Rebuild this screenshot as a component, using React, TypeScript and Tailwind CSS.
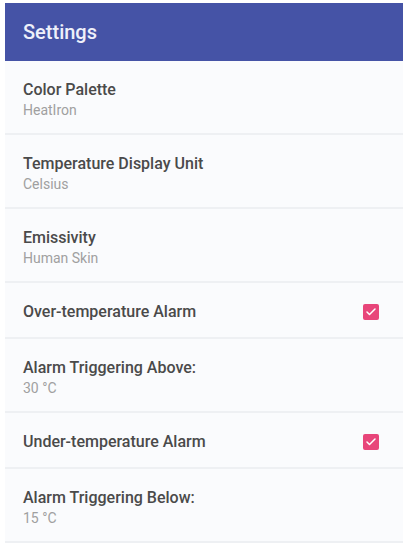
import { Check } from 'lucide-react';

type Row = {
  title: string;
  summary?: string;
  checked?: boolean;
};

const rows: Row[] = [
  { title: 'Color Palette', summary: 'HeatIron' },
  { title: 'Temperature Display Unit', summary: 'Celsius' },
  { title: 'Emissivity', summary: 'Human Skin' },
  { title: 'Over-temperature Alarm', checked: true },
  { title: 'Alarm Triggering Above:', summary: '30 °C' },
  { title: 'Under-temperature Alarm', checked: true },
  { title: 'Alarm Triggering Below:', summary: '15 °C' },
];

const App = () => {
  return (
    <div className="w-[410px] h-[550px] bg-white pt-[3px] px-[5px] overflow-hidden" style={{ fontFamily: 'Roboto, "Noto Sans", sans-serif' }}>
      <div className="w-[398px] bg-[#fafbfd]">
        {/* Toolbar */}
        <div className="h-[58px] bg-[#4553a6] flex items-center pl-[18px]">
          <h1 className="text-[20px] font-medium text-[#eef0fa]">Settings</h1>
        </div>

        {/* Preference list */}
        {rows.map((row) =>
          row.summary ? (
            <div key={row.title} className="h-[74px] pl-[18px] pt-[18px] border-b-2 border-[#eef0f3]">
              <p className="text-[16px] font-medium text-[#4a4a4a] leading-[21px]">{row.title}</p>
              <p className="text-[14px] text-[#a0a0a0] leading-[18px] mt-[1px]">{row.summary}</p>
            </div>
          ) : (
            <div key={row.title} className="h-[56px] pl-[18px] pr-[24px] pt-[4px] flex items-center justify-between border-b-2 border-[#eef0f3]">
              <p className="text-[16px] font-medium text-[#4a4a4a]">{row.title}</p>
              <div className="w-4 h-4 rounded-[2px] bg-[#e8457a] flex items-center justify-center">
                {row.checked && <Check className="w-3 h-3 text-white" strokeWidth={3} />}
              </div>
            </div>
          )
        )}
      </div>
    </div>
  );
};

export default App;
